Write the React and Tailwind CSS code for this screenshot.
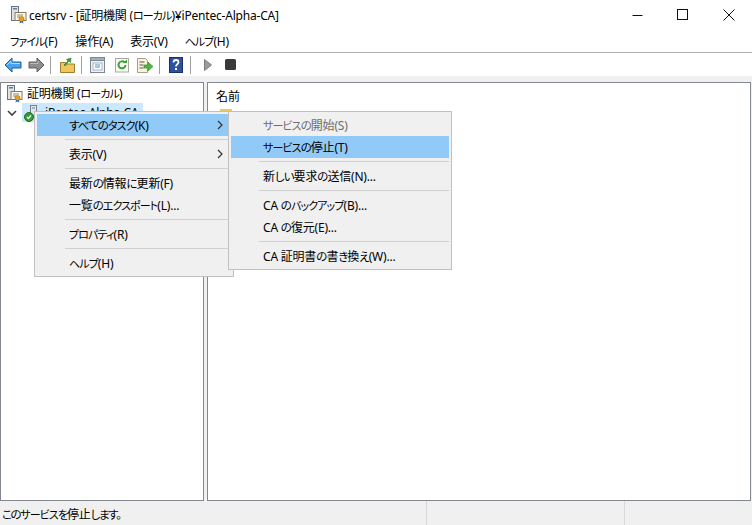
const T = ({ children, tight }) => {
  const parts = String(children).split(/([\u30A0-\u30FF]+|[\u3040-\u309F\u3002]+)/).filter(Boolean);
  return (
    <span className="whitespace-nowrap">
      {parts.map((p, i) => {
        if (/^[\u30A0-\u30FF]/.test(p)) return <span key={i} className="text-[11px] tracking-[-0.9px]">{p}</span>;
        if (/^[\u3040-\u309F\u3002]/.test(p)) return <span key={i} className={`text-[11.5px] ${tight ? "tracking-[-1.4px]" : "tracking-[-0.9px]"}`}>{p}</span>;
        return <span key={i} className="tracking-[-0.2px]">{p}</span>;
      })}
    </span>
  );
};

const Sep = () => <div className="h-[7px] flex items-center pl-[28px]"><div className="h-px w-full bg-[#d0d0d0]" /></div>;

const Chevron = () => (
  <svg width="6" height="10" viewBox="0 0 6 10" className="absolute right-[8px] top-[6px]">
    <path d="M1 1l4 4-4 4" fill="none" stroke="#333" strokeWidth="1.2" />
  </svg>
);

const Item = ({ children, active, disabled, arrow }) => (
  <div className={`relative h-[22px] flex items-center pl-[32px] pt-[1px] text-[12px] ${active ? "bg-[#91c9f7]" : ""} ${disabled ? "text-[#6d6d6d]" : "text-black"}`}>
    <T>{children}</T>
    {arrow && <Chevron />}
  </div>
);

const CertIcon = ({ className }) => (
  <svg width="18" height="18" viewBox="0 0 18 18" className={className}>
    <rect x="2.500" y="0.5" width="7" height="14" fill="#dfe3e8" stroke="#6b7280" />
    <rect x="4" y="2" width="4" height="1.500" fill="#5f7fa8" />
    <rect x="6" y="6.500" width="11" height="8" fill="#fbf7ea" stroke="#8a7a52" />
    <path d="M8 9h6M8 11h3" stroke="#8a8a8a" />
    <circle cx="12.500" cy="13" r="2.600" fill="#e5a11f" stroke="#a86f10" strokeWidth="0.6" />
    <path d="M11 15l-.5 2.500 2-1 2 1-.5-2.500" fill="#3b6fc4" />
  </svg>
);

const Toolbar = () => (
  <div className="h-[23px] bg-white flex items-center relative">
    <svg width="18" height="16" viewBox="0 0 18 16" className="ml-[4px]">
      <path d="M1 8l7-7v4h9v6H8v4z" fill="#4aa3e8" stroke="#1d5fa8" strokeLinejoin="round" />
      <path d="M3 8l4-4v2.500h9" fill="none" stroke="#a8dcfa" />
    </svg>
    <svg width="17" height="16" viewBox="0 0 17 16" className="ml-[6px]">
      <path d="M16 8L9 1v4H1v6h8v4z" fill="#8d8d8d" stroke="#5f5f5f" strokeLinejoin="round" />
      <path d="M2 6.500h8V4" fill="none" stroke="#bdbdbd" />
    </svg>
    <div className="w-px h-[18px] bg-[#a0a0a0] ml-[5px]" />
    <svg width="15" height="16" viewBox="0 0 15 16" className="ml-[9px]">
      <path d="M.5 5.500h5l1 1.500h8v8.500H.5z" fill="#efc55f" stroke="#a08030" />
      <path d="M4 8l4-4-1.500-1.500L11 1l-.5 4.500L9 4l-4 5z" fill="#3f9c35" stroke="#2e7d28" strokeWidth=".6" />
    </svg>
    <div className="w-px h-[18px] bg-[#a0a0a0] ml-[6px]" />
    <svg width="15" height="16" viewBox="0 0 15 16" className="ml-[8px]">
      <rect x=".5" y=".5" width="14" height="15" fill="#eef1f5" stroke="#7b8794" />
      <rect x=".5" y=".5" width="14" height="3" fill="#9fb0c4" stroke="#7b8794" />
      <rect x="3" y="6" width="9" height="7" fill="#fff" stroke="#a9b4c0" />
      <path d="M5 8h5M5 10h5" stroke="#4b8fd0" />
    </svg>
    <svg width="14" height="16" viewBox="0 0 14 16" className="ml-[10px]">
      <rect x=".5" y="1.500" width="13" height="13.500" fill="#fbfbf6" stroke="#a8a8a0" />
      <path d="M10.500 8a3.500 3.500 0 1 1-1-2.600" fill="none" stroke="#3aa13a" strokeWidth="2" />
      <path d="M8 6h4V2.500z" fill="#3aa13a" />
    </svg>
    <svg width="16" height="16" viewBox="0 0 16 16" className="ml-[8px]">
      <path d="M.5 1.500h8l2 2v12h-10z" fill="#f7f3df" stroke="#a59f85" />
      <path d="M2.500 5h5M2.500 8h4M2.500 11h4" stroke="#5a5a5a" />
      <path d="M7 8h4V5l5 4.500-5 4.500v-3H7z" fill="#4fb548" stroke="#2f8a2c" strokeWidth=".6" />
    </svg>
    <div className="w-px h-[18px] bg-[#a0a0a0] ml-[6px]" />
    <svg width="14" height="16" viewBox="0 0 14 16" className="ml-[9px]">
      <rect x=".5" y=".5" width="13" height="15" fill="#2f4f9f" stroke="#1c2f6b" />
      <path d="M4.500 5.500C4.500 3.800 5.500 3 7 3s2.500 1 2.500 2.300C9.500 7.300 7 7.300 7 9.500" fill="none" stroke="#fff" strokeWidth="1.800" />
      <rect x="6" y="11" width="2" height="2" fill="#fff" />
    </svg>
    <div className="w-px h-[18px] bg-[#a0a0a0] ml-[7px]" />
    <svg width="8" height="12" viewBox="0 0 8 12" className="ml-[13px]">
      <path d="M.5.500L7.500 6 .5 11.500z" fill="#9a9a9a" stroke="#7e7e7e" />
    </svg>
    <svg width="11" height="11" viewBox="0 0 11 11" className="ml-[13px]">
      <rect width="11" height="11" rx="1.500" fill="#3a3a3a" />
    </svg>
  </div>
);

export default function App() {
  return (
    <div className="relative w-[752px] h-[525px] overflow-hidden bg-[#f0f0f0] flex flex-col text-[12px] text-black [font-family:'Noto_Sans','Noto_Sans_CJK_JP',sans-serif] [font-feature-settings:'palt']">
      {/* title */}
      <div className="h-[30px] bg-white flex items-center shrink-0 relative">
        <CertIcon className="ml-[9px]" />
        <span className="ml-[2px] pt-[2px]"><T>certsrv - [証明機関 (ローカル)¥iPentec-Alpha-CA]</T></span>
        <div className="ml-auto flex items-center">
          <svg width="12" height="12" viewBox="0 0 12 12" className="mr-[34px]"><path d="M1.500 6.500h10" stroke="#111" /></svg>
          <svg width="12" height="12" viewBox="0 0 12 12" className="mr-[34px]"><rect x=".5" y=".5" width="10" height="10" fill="none" stroke="#111" /></svg>
          <svg width="12" height="12" viewBox="0 0 12 12" className="mr-[17px]"><path d="M.5.500l11 11M11.500.500l-11 11" stroke="#111" /></svg>
        </div>
      </div>
      {/* menu bar */}
      <div className="h-[23px] bg-white border-b border-[#b0b0b0] flex items-center shrink-0">
        <span className="ml-[10px] pt-[1px]"><T>ファイル(F)</T></span>
        <span className="ml-[18px] pt-[1px]"><T>操作(A)</T></span>
        <span className="ml-[17px] pt-[1px]"><T>表示(V)</T></span>
        <span className="ml-[17px] pt-[1px]"><T>ヘルプ(H)</T></span>
      </div>
      <Toolbar />
      <div className="h-[6px] shrink-0 bg-[#f0f0f0]" />
      {/* panes */}
      <div className="flex-1 flex gap-[3px] min-h-0">
        <div className="w-[204px] bg-white border border-[#828790] relative">
          <div className="h-[19px] mt-[1px] flex items-center pl-[4px]">
            <CertIcon />
            <span className="ml-[4px]"><T>証明機関 (ローカル)</T></span>
          </div>
          <div className="flex items-center h-[19px]">
            <svg width="10" height="7" viewBox="0 0 10 7" className="ml-[6px] mt-[1px]"><path d="M1 1l4 4 4-4" fill="none" stroke="#444" strokeWidth="1.600" /></svg>
            <div className="ml-[5px] w-[121px] h-[19px] bg-[#cce8ff] flex items-center relative">
              <svg width="16" height="19" viewBox="0 0 16 19" className="ml-[1px]">
                <rect x="7.500" y="2.500" width="6" height="10" fill="#e4e7ea" stroke="#7a7f85" />
                <path d="M9 5h3" stroke="#5f7fa8" />
                <circle cx="6" cy="14" r="4.500" fill="#2e9e34" stroke="#1f6f24" />
                <path d="M4 14l1.500 1.500 2.500-3" fill="none" stroke="#fff" strokeWidth="1.300" />
              </svg>
              <span className="ml-[6px]"><T>iPentec-Alpha-CA</T></span>
            </div>
          </div>
        </div>
        <div className="flex-1 bg-white border border-[#828790] mr-px">
          <div className="h-[26px] flex items-center pl-[8px] pt-[2px]">名前</div>
          <div className="w-[12px] h-[3px] bg-[#efc55f] ml-[12px]" />
        </div>
      </div>
      {/* status */}
      <div className="h-[24px] shrink-0 flex items-center bg-[#f0f0f0]">
        <span className="w-[427px] pl-[2px] pt-[3px] h-full flex items-center border-r border-[#d9d9d9]"><T tight>このサービスを停止します。</T></span>
        <span className="w-[198px] h-full border-r border-[#d9d9d9]" />
      </div>
      {/* context menu */}
      <div className="absolute left-[34px] top-[111px] w-[200px] h-[166px] bg-[#f0f0f0] border border-[#c0c0c0] px-[2px] pt-[2px]">
        <Item active arrow>すべてのタスク(K)</Item>
        <Sep />
        <Item arrow>表示(V)</Item>
        <Sep />
        <Item>最新の情報に更新(F)</Item>
        <Item>一覧のエクスポート(L)...</Item>
        <Sep />
        <Item>プロパティ(R)</Item>
        <Sep />
        <Item>ヘルプ(H)</Item>
      </div>
      {/* submenu */}
      <div className="absolute left-[228px] top-[111px] w-[224px] h-[159px] bg-[#f0f0f0] border border-[#c0c0c0] px-[2px] pt-[2px]">
        <Item disabled>サービスの開始(S)</Item>
        <Item active>サービスの停止(T)</Item>
        <Sep />
        <Item>新しい要求の送信(N)...</Item>
        <Sep />
        <Item>CA のバックアップ(B)...</Item>
        <Item>CA の復元(E)...</Item>
        <Sep />
        <Item>CA 証明書の書き換え(W)...</Item>
      </div>
    </div>
  );
}
